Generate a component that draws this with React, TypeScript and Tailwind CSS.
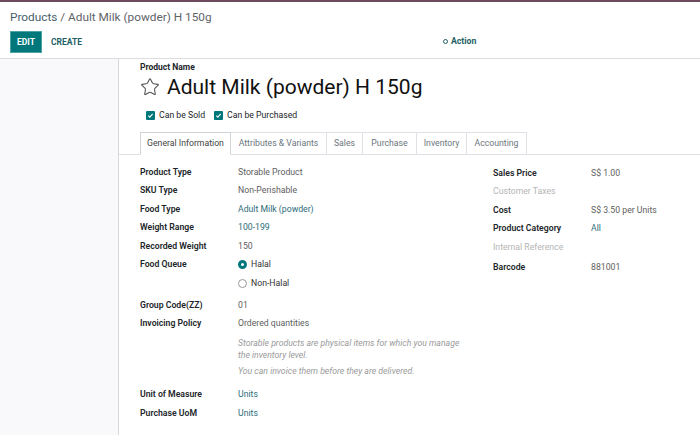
import React from 'react';
import { Star } from 'lucide-react';

const TEAL = '#00777b';

interface FieldProps {
  label: string;
  children?: React.ReactNode;
  muted?: boolean;
  className?: string;
}

function Field({ label, children, muted = false, className = 'h-[18.5px]' }: FieldProps) {
  return (
    <div className={`flex items-center ${className}`}>
      <div
        className={`w-[98px] shrink-0 ${
          muted ? 'text-[#b5b5b5]' : 'font-semibold text-[#212529]'
        }`}
      >
        {label}
      </div>
      <div className="text-[#5e5e5e]">{children}</div>
    </div>
  );
}

function Link({ children }: { children: React.ReactNode }) {
  return <span className="text-[#2c6c79]">{children}</span>;
}

function Check() {
  return (
    <span className="flex h-[9px] w-[9px] items-center justify-center rounded-[1px] bg-[#00777b]">
      <svg width="7" height="7" viewBox="0 0 8 8">
        <path d="M1.5 4.2 L3.2 5.8 L6.5 2.2" fill="none" stroke="white" strokeWidth="1.3" />
      </svg>
    </span>
  );
}

const tabs = [
  { name: 'General Information', w: 'w-[91px]', active: true },
  { name: 'Attributes & Variants', w: 'w-[96px]' },
  { name: 'Sales', w: 'w-[36px]' },
  { name: 'Purchase', w: 'w-[54px]' },
  { name: 'Inventory', w: 'w-[50px]' },
  { name: 'Accounting', w: 'w-[60px]' },
];

export default function App() {
  return (
    <div className="h-[435px] w-[700px] overflow-hidden bg-white font-['Roboto',sans-serif] text-[8.7px]">
      <div className="h-[2px] bg-[#6d4b5f]" />

      {/* control panel */}
      <div className="h-[57px] border-b border-[#dcdcdc] px-[10px]">
        <div className="pt-[6px] text-[11.8px] leading-[18px] text-[#5f6368]">
          <span className="text-[#43616a]">Products</span> / Adult Milk (powder) H 150g
        </div>
        <div className="mt-[5px] flex items-center">
          <div className="flex w-[433px] items-center">
            <button
              className="flex h-[22px] w-[32px] items-center justify-center border border-[#4fa3a6] text-[8.5px] font-bold text-white"
              style={{ backgroundColor: TEAL }}
            >
              EDIT
            </button>
            <span className="ml-[9px] text-[8.5px] font-bold text-[#1f5f66]">CREATE</span>
          </div>
          <div className="flex items-center gap-[3px] text-[8.7px] font-bold text-[#1f5f66]">
            <span className="h-[5px] w-[5px] rounded-full border-[1.5px] border-[#1f5f66]" />
            Action
          </div>
        </div>
      </div>

      <div className="flex h-[376px]">
        <div className="w-[119px] shrink-0 border-r border-[#d8d8d8] bg-[#f9f9fb]" />

        <div className="flex-1 bg-white">
          <div className="pl-[21px] pt-[3px]">
            <div className="text-[8.5px] font-bold leading-[11px] text-[#212529]">Product Name</div>
            <div className="mt-[2px] flex items-center">
              <Star size={20} strokeWidth={1.3} className="text-[#555]" />
              <span className="ml-[7px] text-[21px] leading-[24px] text-[#111]">
                Adult Milk (powder) H 150g
              </span>
            </div>
            <div className="mt-[11px] flex h-[11px] items-center pl-[6px] text-[#212529]">
              <Check />
              <span className="ml-[4px]">Can be Sold</span>
              <span className="ml-[9px]">
                <Check />
              </span>
              <span className="ml-[4px]">Can be Purchased</span>
            </div>
          </div>

          {/* tabs */}
          <div className="mt-[11px] flex border-b border-[#dee2e6] pl-[21px]">
            {tabs.map((t) => (
              <div
                key={t.name}
                className={`${t.w} -mb-px flex h-[23px] items-center justify-center border border-l-0 first:border-l ${
                  t.active ? 'border-[#cfd4d9] border-b-white text-[#444]' : 'border-[#dee2e6] text-[#6c757d]'
                }`}
              >
                {t.name}
              </div>
            ))}
          </div>

          {/* fields */}
          <div className="flex pl-[21px] pt-[8px]">
            <div className="w-[353px]">
              <Field label="Product Type">Storable Product</Field>
              <Field label="SKU Type">Non-Perishable</Field>
              <Field label="Food Type">
                <Link>Adult Milk (powder)</Link>
              </Field>
              <Field label="Weight Range">
                <Link>100-199</Link>
              </Field>
              <Field label="Recorded Weight">150</Field>
              <Field label="Food Queue">
                <span className="flex items-center">
                  <span className="h-[9px] w-[9px] rounded-full border-[3px] border-[#00777b] bg-white" />
                  <span className="ml-[4px] text-[#333]">Halal</span>
                </span>
              </Field>
              <Field label="" className="h-[23px] items-start pt-[3px]">
                <span className="flex items-center">
                  <span className="h-[9px] w-[9px] rounded-full border border-[#999] bg-white" />
                  <span className="ml-[4px] text-[#333]">Non-Halal</span>
                </span>
              </Field>
              <Field label="Group Code(ZZ)" className="h-[18px]">01</Field>
              <Field label="Invoicing Policy" className="h-[18px]">Ordered quantities</Field>
              <div className="ml-[98px] mt-[4px] w-[228px] italic leading-[12px] text-[#9a9a9a]">
                <div>Storable products are physical items for which you manage the inventory level.</div>
                <div className="mt-[4px]">You can invoice them before they are delivered.</div>
              </div>
              <Field label="Unit of Measure" className="mt-[8px] h-[19px]">
                <Link>Units</Link>
              </Field>
              <Field label="Purchase UoM" className="h-[19px]">
                <Link>Units</Link>
              </Field>
            </div>

            <div className="pt-[1px]">
              <Field label="Sales Price">S$ 1.00</Field>
              <Field label="Customer Taxes" muted />
              <Field label="Cost">S$ 3.50 per Units</Field>
              <Field label="Product Category">
                <Link>All</Link>
              </Field>
              <Field label="Internal Reference" muted />
              <Field label="Barcode" className="mt-[2.5px] h-[18px]">881001</Field>
            </div>
          </div>
        </div>
      </div>
    </div>
  );
}
